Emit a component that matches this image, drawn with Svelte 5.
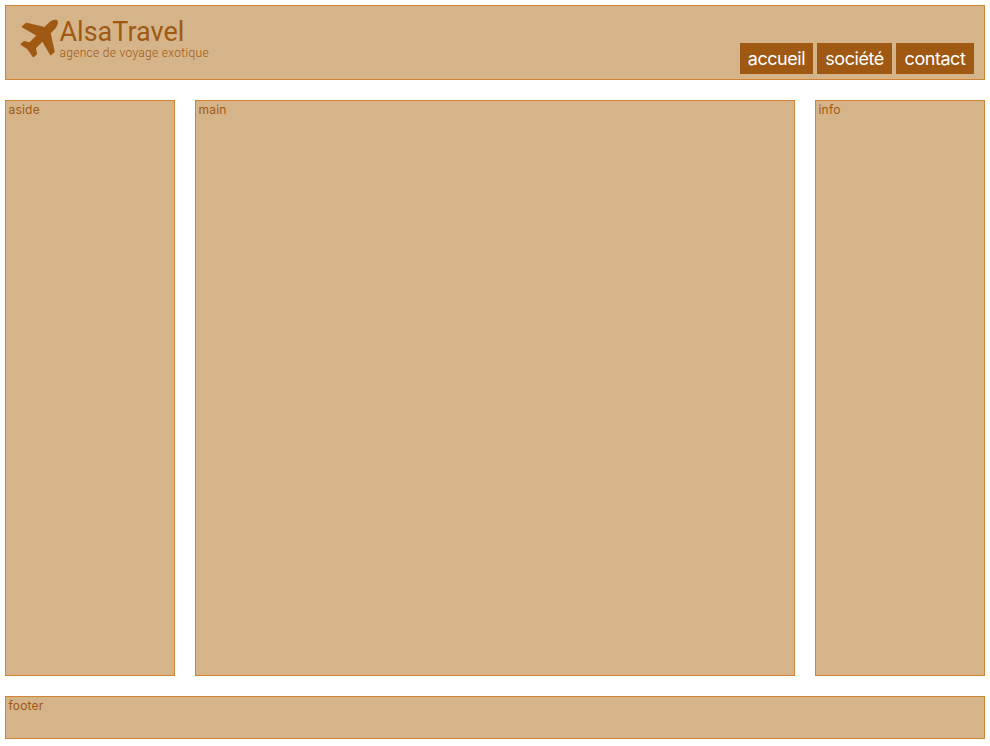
<script>
  const links = [
    { label: 'accueil', width: 73 },
    { label: 'société', width: 75 },
    { label: 'contact', width: 78 }
  ];
</script>

<div class="page">
  <header class="box">
    <a class="brand" href="#top">
      <svg class="plane" width="40" height="42" viewBox="4 6 40 42" aria-hidden="true">
        <path d="M42.2 8.2C39.5 7 36 8.6 33.3 11.2L29.5 15L11.8 10.8Q11 10.7 10.4 11.3L7 14.2Q6.4 15 7.3 15.6L21.2 23.6L14.6 30.2L9.1 29.1Q8.6 29.1 8.2 29.5L5.6 31.9Q5.2 32.5 5.8 33L12.2 37L17.8 44.9Q18.4 45.5 19 44.9L21.8 42.4Q22.2 42 22.1 41.4L20.9 36.3L27.4 29.8L35.1 43.1Q35.6 43.8 36.3 43.1L39.2 40.4Q39.8 39.8 39.6 39L35.7 21.3L39.6 17.2C42.4 14.4 43.9 10 42.2 8.2Z" />
      </svg>
      <span class="words">
        <span class="name">AlsaTravel</span>
        <span class="tagline">agence de voyage exotique</span>
      </span>
    </a>
    <nav>
      {#each links as link}
        <a href="#{link.label}" style="width: {link.width}px">{link.label}</a>
      {/each}
    </nav>
  </header>

  <div class="columns">
    <aside class="box label">aside</aside>
    <main class="box label">main</main>
    <section class="box label">info</section>
  </div>

  <footer class="box label">footer</footer>
</div>

<style>
  :global(body) {
    margin: 0;
    background: #fff;
  }

  .page {
    box-sizing: border-box;
    height: 746px;
    padding: 5px 5px 7px;
    display: flex;
    flex-direction: column;
    gap: 20px;
    font-family: Inter, 'Liberation Sans', sans-serif;
    color: #9f5913;
  }

  .box {
    box-sizing: border-box;
    background: #d6b48a;
    border: 1px solid #d08434;
  }

  .label {
    padding: 1px 2.5px;
    font-size: 12px;
    line-height: 15px;
    letter-spacing: 0.2px;
  }

  header {
    flex: 0 0 75px;
    display: flex;
    justify-content: space-between;
    padding: 12px 10px 5px 13px;
  }

  a {
    color: inherit;
    text-decoration: none;
  }

  .brand {
    display: flex;
    align-items: flex-start;
    font-family: Roboto, sans-serif;
  }

  .plane {
    fill: #9f5913;
  }

  .words {
    display: flex;
    flex-direction: column;
    padding-left: 0.5px;
    white-space: nowrap;
  }

  .name {
    font-size: 27px;
    line-height: 29px;
  }

  .tagline {
    font-size: 12px;
    font-weight: 300;
    line-height: 12px;
    letter-spacing: 0.3px;
  }

  nav {
    display: flex;
    align-self: flex-end;
    gap: 4px;
  }

  nav a {
    height: 31px;
    line-height: 31px;
    text-align: center;
    font-size: 18px;
    letter-spacing: -0.45px;
    color: #fff;
    background: #9f5913;
  }

  .columns {
    flex: 1;
    display: grid;
    grid-template-columns: 170px 600px 170px;
    gap: 20px;
  }

  footer {
    flex: 0 0 43px;
  }
</style>
